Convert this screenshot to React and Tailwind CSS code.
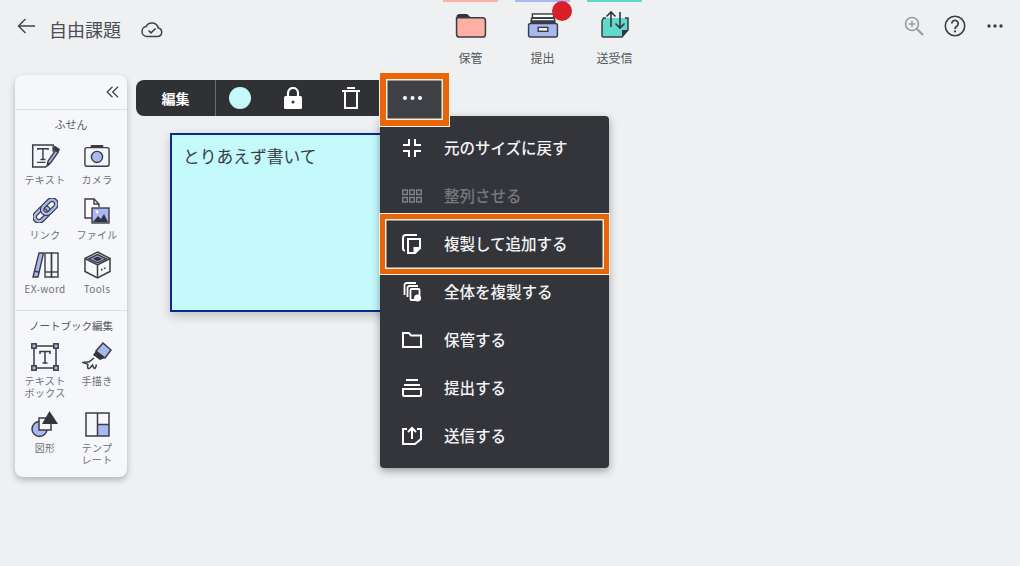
import React from 'react';

const INK = '#3a3d44';
const BLUE = '#a9b8f2';

const BackIcon = () => (
  <svg width="18" height="16" viewBox="0 0 18 16" fill="none" stroke="#3f4248" strokeWidth="1.4">
    <path d="M18 8H1.500M8.500 1 1.500 8l7 7" />
  </svg>
);

const CloudIcon = () => (
  <svg width="22" height="18" viewBox="0 0 22 18" fill="none" stroke="#3f4248" strokeWidth="1.5">
    <path d="M6 16.500h10.500a4.300 4.300 0 0 0 .8-8.500A6.600 6.600 0 0 0 5 6.600a5 5 0 0 0 1 9.900Z" />
    <path d="m7.500 10.500 2.500 2.400 4.600-4.400" />
  </svg>
);

const FolderIcon = () => (
  <svg width="32" height="25" viewBox="0 0 32 26">
    <path d="M1 4a3 3 0 0 1 3-3h8l4 4H1Z" fill="#33353b" />
    <path d="M1 5h27a3 3 0 0 1 3 3v14a3 3 0 0 1-3 3H4a3 3 0 0 1-3-3Z" fill="#ffb0a5" stroke="#3a3d44" strokeWidth="1.6" />
  </svg>
);

const TrayIcon = () => (
  <svg width="32" height="25" viewBox="0 0 32 26" fill="none" stroke="#3a3d44" strokeWidth="1.5">
    <rect x="5" y="1" width="22" height="4" fill="#fff" />
    <path d="M4 9.500V5.500h24v4" fill="#fff" />
    <path d="M3 9h26" strokeWidth="3" />
    <rect x="1" y="11" width="30" height="14" rx="2" fill={BLUE} />
    <rect x="11" y="15" width="10" height="4" fill="#fff" />
  </svg>
);

const SendIcon = () => (
  <svg width="30" height="28" viewBox="0 0 30 28">
    <path d="M6 8H3.500L2 11v15a1 1 0 0 0 1 1h19l6-7V8h-3" fill="#5fd9cc" stroke="#3a3d44" strokeWidth="1.500" />
    <path d="M22 27v-7h6Z" fill="#33353b" />
    <path d="M11 17V2M6.500 6.500 11 2l4.500 4.500M20 2v16M15.500 13.500 20 18l4.500-4.500" fill="none" stroke="#33353b" strokeWidth="1.600" />
  </svg>
);

const ZoomIcon = () => (
  <svg width="20" height="20" viewBox="0 0 20 20" fill="none" stroke="#9b9da1" strokeWidth="1.600">
    <circle cx="8" cy="8" r="6.500" />
    <path d="M5 8h6M8 5v6" />
    <path d="m13 13 6 6" strokeWidth="2.200" />
  </svg>
);

const HelpIcon = () => (
  <svg width="22" height="22" viewBox="0 0 22 22" fill="none" stroke="#3a3d44" strokeWidth="1.600">
    <circle cx="11" cy="11" r="9.700" />
    <path d="M7.800 8.500a3.200 3.200 0 1 1 5 2.700c-1.200.8-1.800 1.400-1.800 2.800" strokeWidth="1.800" />
    <circle cx="11" cy="16.400" r="1.100" fill="#3a3d44" stroke="none" />
  </svg>
);

const Dots = ({ color, wide }) => (
  <svg width={wide ? 19 : 16} height="4" viewBox={wide ? '0 0 19 4' : '0 0 16 4'} fill={color}>
    <circle cx="2" cy="2" r={wide ? 2 : 1.700} />
    <circle cx={wide ? 9.500 : 8} cy="2" r={wide ? 2 : 1.700} />
    <circle cx={wide ? 17 : 14} cy="2" r={wide ? 2 : 1.700} />
  </svg>
);

const ChevronsIcon = () => (
  <svg width="13" height="12" viewBox="0 0 13 12" fill="none" stroke="#44474d" strokeWidth="1.300">
    <path d="M6.500.8 1.200 6l5.300 5.200M12 .8 6.700 6l5.300 5.200" />
  </svg>
);

const TextIcon = () => (
  <svg width="29" height="24" viewBox="0 0 34 28" fill="none" stroke={INK} strokeWidth="1.700">
    <path d="M22 23.500 17 27H2V1h24v8" />
    <path d="M8 7V5.500h12V7M14 5.500V18M11 18h6M7 21.500h10" />
    <path d="m20 20 9-13 3 2.200-9 13-3.800 1.500Z" fill={BLUE} />
    <path d="m28 3 5 3.500-2 2.500-4-3Z" fill="#33353b" />
  </svg>
);

const CameraIcon = () => (
  <svg width="26" height="24" viewBox="0 0 28 24" fill="none" stroke={INK} strokeWidth="1.500">
    <path d="M8 3V1h12v2" fill="#33353b" />
    <rect x="1" y="3" width="26" height="20" rx="2" />
    <circle cx="14" cy="13" r="6" fill={BLUE} />
  </svg>
);

const LinkIcon = () => (
  <svg width="25" height="25" viewBox="0 0 26 26" fill="none">
    <g transform="rotate(-45 13 13)">
      <rect x="-1" y="8.500" width="17" height="9" rx="4.500" stroke={INK} strokeWidth="5" />
      <rect x="-1" y="8.500" width="17" height="9" rx="4.500" stroke={BLUE} strokeWidth="2.500" />
      <rect x="10" y="8.500" width="17" height="9" rx="4.500" stroke={INK} strokeWidth="5" />
      <rect x="10" y="8.500" width="17" height="9" rx="4.500" stroke={BLUE} strokeWidth="2.500" />
    </g>
  </svg>
);

const FileIcon = () => (
  <svg width="26" height="26" viewBox="0 0 26 26" fill="none" stroke={INK} strokeWidth="1.400">
    <path d="M8 20H1V1h9l5 5v3" fill="#fff" />
    <path d="M10 1v5h5" />
    <rect x="8" y="10" width="17" height="15" fill={BLUE} />
    <path d="m9 24 5-6 3 3 3-5 4 8Z" fill="#33353b" stroke="none" />
    <circle cx="13" cy="14" r="1.400" fill="#fff" stroke="none" />
  </svg>
);

const BooksIcon = () => (
  <svg width="27" height="26" viewBox="0 0 27 26" fill="none" stroke={INK} strokeWidth="1.400">
    <path d="M7 1h4.500L6 25H1Z" fill={BLUE} />
    <path d="m2 19 5 1.200" />
    <rect x="13" y="1" width="6.500" height="24" />
    <rect x="19.500" y="1" width="6.500" height="24" />
    <path d="M13 20h13" />
  </svg>
);

const BoxIcon = () => (
  <svg width="27" height="28" viewBox="0 0 27 28" fill="none" stroke={INK} strokeWidth="1.500">
    <path d="M13.500 1 26 7.500v13L13.500 27 1 20.500v-13Z" />
    <path d="M1 7.500 13.500 14 26 7.500M13.500 14v13" />
    <path d="M13.500 3.500 22 7.800 13.500 12 5 7.800Z" fill={BLUE} />
    <path d="M8.500 7.800 13.500 5.500l5 2.300-5 2.400Z" fill="#33353b" stroke="none" />
    <path d="M17 19l1.500-.700M20 17.600l1.500-.700" />
  </svg>
);

const TextBoxIcon = () => (
  <svg width="28" height="28" viewBox="0 0 28 28" fill="none" stroke={INK} strokeWidth="1.500">
    <rect x="3" y="3" width="22" height="22" />
    <path d="M9 11V8.500h10V11M14 8.500V20M11.500 20h5" />
    {[[3, 3], [25, 3], [3, 25], [25, 25]].map(([x, y]) => (
      <rect key={`${x}-${y}`} x={x - 2.200} y={y - 2.200} width="4.400" height="4.400" fill={BLUE} />
    ))}
  </svg>
);

const PenIcon = () => (
  <svg width="30" height="30" viewBox="0 0 30 30" fill="none" stroke={INK} strokeWidth="1.500">
    <path d="M21 1 29 8l-6 8-9-7Z" fill={BLUE} />
    <path d="M14 9l9 7-5 2-7-5Z" fill="#33353b" stroke="none" />
    <path d="M12 16c-2 2-4 3-5 4-1.500 0-3.500-.5-6 .5 2 .5 4 1 5 2-.5 1.500-.5 3 0 4 1.500 1 3-2 4.500-3.500.5 1.500 1 3 2 3.500 1 0 1.500-2 2-4" />
  </svg>
);

const ShapesIcon = () => (
  <svg width="28" height="27" viewBox="0 0 28 27" fill="none" stroke={INK} strokeWidth="1.500">
    <circle cx="8.500" cy="18" r="7.500" fill={BLUE} />
    <rect x="8" y="7" width="12" height="12" fill="#f6f7fa" />
    <path d="M18.500 0 27 13H11Z" fill="#33353b" stroke="none" />
  </svg>
);

const TemplateIcon = () => (
  <svg width="25" height="25" viewBox="0 0 25 25" fill="none" stroke={INK} strokeWidth="1.500">
    <rect x="13" y="13" width="11" height="11" fill={BLUE} stroke="none" />
    <rect x="1" y="1" width="23" height="23" />
    <path d="M12.500 1v23M12.500 12.500H24" />
  </svg>
);

const ShrinkIcon = () => (
  <svg width="20" height="20" viewBox="0 0 20 20" fill="none" stroke="#fff" strokeWidth="2">
    <path d="M1 7h6V1M13 1v6h6M1 13h6v6M19 13h-6v6" />
  </svg>
);

const GridIcon = () => (
  <svg width="20" height="14" viewBox="0 0 20 14" fill="none" stroke="#7d7f83" strokeWidth="1.500">
    {[1, 8, 15].map((x) => (
      <g key={x}>
        <rect x={x - 0.250} y="1" width="4.500" height="4.500" />
        <rect x={x - 0.250} y="8.500" width="4.500" height="4.500" />
      </g>
    ))}
  </svg>
);

const CopyIcon = () => (
  <svg width="20" height="20" viewBox="0 0 20 20" fill="none" stroke="#fff" strokeWidth="2">
    <path d="M3 16.500A2 2 0 0 1 1 14.500V4a3 3 0 0 1 3-3h11" />
    <path d="M6 5h12v9l-5 5H6Z" />
    <path d="M12.500 19v-5H19" fill="#fff" />
  </svg>
);

const CopyAllIcon = () => (
  <svg width="20" height="20" viewBox="0 0 20 20" fill="none" stroke="#fff" strokeWidth="1.800">
    <path d="M2.500 13V3a2 2 0 0 1 2-2H14" />
    <path d="M5.500 15V6a2 2 0 0 1 2-2H16" />
    <rect x="8.500" y="7" width="9" height="11" rx="1" />
    <circle cx="15.500" cy="16" r="3.500" fill="#fff" stroke="none" />
  </svg>
);

const FolderLine = () => (
  <svg width="20" height="16" viewBox="0 0 20 16" fill="none" stroke="#fff" strokeWidth="2">
    <path d="M1 1h6l2 2.500h10V15H1Z" />
  </svg>
);

const TrayLine = () => (
  <svg width="20" height="18" viewBox="0 0 20 18" fill="none" stroke="#fff" strokeWidth="2">
    <path d="M4 1h12M2 6h16" />
    <path d="M1 10h18v6a1 1 0 0 1-1 1H2a1 1 0 0 1-1-1Z" />
  </svg>
);

const SendLine = () => (
  <svg width="20" height="20" viewBox="0 0 20 20" fill="none" stroke="#fff" strokeWidth="2">
    <path d="M5 3H1v15h12l6-5V3h-4" />
    <path d="M10 13V2M6 6l4-4 4 4" />
  </svg>
);

const LockIcon = () => (
  <svg width="20" height="22" viewBox="0 0 20 22">
    <path d="M5 10V6a5 5 0 0 1 10 0v4" fill="none" stroke="#fff" strokeWidth="2.200" />
    <rect x="1" y="9" width="18" height="13" rx="1.500" fill="#fff" />
    <circle cx="10" cy="15" r="1.500" fill="#33353b" />
  </svg>
);

const TrashIcon = () => (
  <svg width="18" height="22" viewBox="0 0 18 22" fill="none" stroke="#fff" strokeWidth="2">
    <path d="M5 1h8M0 4h18" />
    <path d="M3 4.500V21h12V4.500" />
  </svg>
);

const TopTab = ({ strip, icon, label }) => (
  <div className="flex w-[55px] flex-col items-center">
    <div className={`h-[2px] w-full ${strip}`} />
    <div className="flex h-[36px] items-end">{icon}</div>
    <span className="mt-[12px] text-[12px] leading-[16px] text-[#54575d]">{label}</span>
  </div>
);

const ToolItem = ({ icon, label }) => (
  <div className="flex flex-col items-center">
    <div className="flex h-[32px] items-center justify-center">{icon}</div>
    <span className="mt-[2px] whitespace-pre-line text-center text-[10px] leading-[12px] tracking-[0.3px] text-[#6f7278]">{label}</span>
  </div>
);

const MenuRow = ({ icon, label, dim }) => (
  <div className="flex h-[48px] items-center">
    <div className="flex w-[64px] shrink-0 justify-center">{icon}</div>
    <span className={`text-[15.500px] font-medium ${dim ? 'text-[#77797d]' : 'text-[#f4f4f5]'}`}>{label}</span>
  </div>
);

export default function App() {
  return (
    <div className="relative flex h-[566px] w-[1020px] flex-col overflow-hidden bg-[#eff0f2] font-['Noto_Sans_CJK_JP','Noto_Sans',sans-serif]">
      {/* Header */}
      <header className="flex h-[75px] shrink-0 items-start">
        <div className="flex w-[443px] shrink-0 items-start pl-[17px] pt-[17px]">
          <span className="flex pt-[1px]"><BackIcon /></span>
          <span className="ml-[14px] text-[18px] leading-[24px] text-[#4b4e54]">自由課題</span>
          <span className="ml-[20px] flex pt-[3px]"><CloudIcon /></span>
        </div>
        <div className="flex gap-[17px]">
          <TopTab strip="bg-[#ffb0a5]" icon={<FolderIcon />} label="保管" />
          <div className="relative">
            <TopTab strip="bg-[#a9b8f2]" icon={<TrayIcon />} label="提出" />
            <div className="absolute left-[37px] top-[1px] h-[20px] w-[20px] rounded-full bg-[#d7202a]" />
          </div>
          <TopTab strip="bg-[#5fd9cc]" icon={<SendIcon />} label="送受信" />
        </div>
        <div className="ml-auto flex items-center pr-[17px] pt-[15px]">
          <ZoomIcon />
          <span className="ml-[20px] flex"><HelpIcon /></span>
          <span className="ml-[21px] flex"><Dots color="#3a3d44" /></span>
        </div>
      </header>

      <div className="flex items-start">
        {/* Tool palette */}
        <aside className="ml-[15px] w-[112px] shrink-0 rounded-[8px] bg-[#f6f7fa] pb-[11px] shadow-[0_3px_6px_rgba(0,0,0,0.25)]">
          <div className="flex h-[35px] items-center justify-end border-b border-[#dfe0e3] pr-[8px]">
            <ChevronsIcon />
          </div>
          <p className="mt-[6px] text-center text-[11px] leading-[16px] text-[#54575d]">ふせん</p>
          <div className="mt-[8px] grid grid-cols-2 gap-y-[8.500px] px-[4px]">
            <ToolItem icon={<TextIcon />} label="テキスト" />
            <ToolItem icon={<CameraIcon />} label="カメラ" />
            <ToolItem icon={<LinkIcon />} label="リンク" />
            <ToolItem icon={<FileIcon />} label="ファイル" />
            <ToolItem icon={<BooksIcon />} label="EX-word" />
            <ToolItem icon={<BoxIcon />} label="Tools" />
          </div>
          <div className="mt-[15px] border-t border-[#dfe0e3] pt-[7px]">
            <p className="text-center text-[10.500px] leading-[16px] text-[#54575d]">ノートブック編集</p>
            <div className="mt-[7px] grid grid-cols-2 gap-y-[9px] px-[4px]">
              <ToolItem icon={<TextBoxIcon />} label={'テキスト\nボックス'} />
              <ToolItem icon={<PenIcon />} label="手描き" />
              <ToolItem icon={<ShapesIcon />} label="図形" />
              <ToolItem icon={<TemplateIcon />} label={'テンプ\nレート'} />
            </div>
          </div>
        </aside>

        {/* Canvas */}
        <main className="relative ml-[9px] mt-[5px] flex flex-1 flex-col">
          <div className="flex h-[36px] w-[250px] items-center rounded-[8px] bg-[#2f3135] text-white">
            <div className="flex h-full w-[80px] items-center justify-center border-r border-[#6a6c70] text-[14px] font-bold">編集</div>
            <div className="ml-[13px] h-[22px] w-[22px] rounded-full bg-[#c4fafc]" />
            <span className="ml-[32px] flex"><LockIcon /></span>
            <span className="ml-[39px] flex"><TrashIcon /></span>
          </div>

          {/* Sticky note */}
          <div className="ml-[34px] mt-[17px] h-[179px] w-[240px] border-2 border-[#0b2a8a] bg-[#c4fafc] px-[11px] py-[9px] text-[16.750px] leading-[24px] text-[#3a3d44] shadow-[0_4px_10px_rgba(0,0,0,0.2)]">
            とりあえず書いて
          </div>

          {/* Overflow menu */}
          <div className="absolute left-[244px] top-[36px] w-[229px] rounded-[4px] bg-[#33353b] py-[8px] shadow-[0_3px_8px_rgba(0,0,0,0.35)]">
            <MenuRow icon={<ShrinkIcon />} label="元のサイズに戻す" />
            <MenuRow icon={<GridIcon />} label="整列させる" dim />
            <MenuRow icon={<CopyIcon />} label="複製して追加する" />
            <MenuRow icon={<CopyAllIcon />} label="全体を複製する" />
            <MenuRow icon={<FolderLine />} label="保管する" />
            <MenuRow icon={<TrayLine />} label="提出する" />
            <MenuRow icon={<SendLine />} label="送信する" />
          </div>

          {/* Orange callouts */}
          <div className="absolute left-[244px] top-[-7px] flex h-[53px] w-[69px] items-center justify-center border-[6px] border-[#e8650a] bg-[#3f4146] pb-[3px] pr-[4px] shadow-[inset_0_0_0_1.500px_#f7f0dc,0_0_0_1px_#f7f0dc]">
            <Dots color="#ffffff" wide />
          </div>
          <div className="absolute left-[244px] top-[134px] h-[60px] w-[229px] border-[5px] border-[#e8650a] shadow-[inset_0_0_0_1.500px_#f7f0dc,0_0_0_1px_#f7f0dc]" />
        </main>
      </div>
    </div>
  );
}
